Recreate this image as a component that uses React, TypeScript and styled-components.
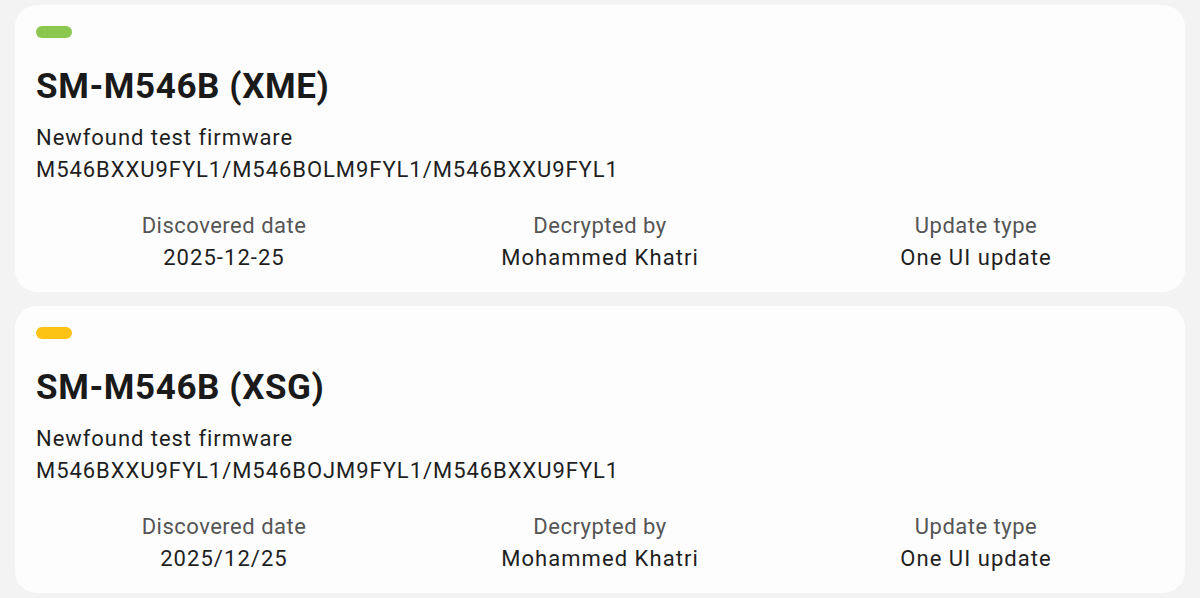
import React from "react";
import styled, { createGlobalStyle } from "styled-components";

const GlobalStyle = createGlobalStyle`
  html, body {
    margin: 0;
    padding: 0;
    background: #f3f3f3;
  }
  body {
    font-family: Roboto, "Noto Sans", "Liberation Sans", sans-serif;
    -webkit-font-smoothing: antialiased;
  }
`;

const Page = styled.div`
  display: flex;
  flex-direction: column;
  gap: 14px;
  padding: 5px 15px 6px 15px;
  width: 1200px;
  box-sizing: border-box;
`;

const Card = styled.section`
  background: #fdfdfd;
  border-radius: 22px;
  padding: 21px 21px 18px 21px;
  display: flex;
  flex-direction: column;
`;

const Pill = styled.div<{ $color: string }>`
  width: 36px;
  height: 12px;
  border-radius: 6px;
  background: ${(p) => p.$color};
`;

const Title = styled.h2`
  margin: 27px 0 0 0;
  font-size: 35px;
  line-height: 44px;
  font-weight: 700;
  color: #1a1a1a;
  letter-spacing: 0.6px;
`;

const Desc = styled.div`
  margin-top: 13px;
  font-size: 22px;
  line-height: 32px;
  color: #1f1f1f;
  letter-spacing: 0.95px;
`;

const InfoRow = styled.div`
  margin-top: 24px;
  display: grid;
  grid-template-columns: repeat(3, 1fr);
`;

const InfoCell = styled.div`
  display: flex;
  flex-direction: column;
  align-items: center;
  text-align: center;
`;

const Label = styled.span`
  font-size: 22px;
  line-height: 32px;
  color: #555555;
  letter-spacing: 0.5px;
`;

const Value = styled.span`
  font-size: 22px;
  line-height: 32px;
  color: #1f1f1f;
  letter-spacing: 1.05px;
`;

type Item = {
  color: string;
  title: string;
  firmware: string;
  date: string;
  by: string;
  type: string;
};

const items: Item[] = [
  {
    color: "#8bc750",
    title: "SM-M546B (XME)",
    firmware: "M546BXXU9FYL1/M546BOLM9FYL1/M546BXXU9FYL1",
    date: "2025-12-25",
    by: "Mohammed Khatri",
    type: "One UI update",
  },
  {
    color: "#fcc314",
    title: "SM-M546B (XSG)",
    firmware: "M546BXXU9FYL1/M546BOJM9FYL1/M546BXXU9FYL1",
    date: "2025/12/25",
    by: "Mohammed Khatri",
    type: "One UI update",
  },
];

export default function App() {
  return (
    <>
      <GlobalStyle />
      <Page>
        {items.map((it) => (
          <Card key={it.title}>
            <Pill $color={it.color} />
            <Title>{it.title}</Title>
            <Desc>
              Newfound test firmware
              <br />
              {it.firmware}
            </Desc>
            <InfoRow>
              <InfoCell>
                <Label>Discovered date</Label>
                <Value>{it.date}</Value>
              </InfoCell>
              <InfoCell>
                <Label>Decrypted by</Label>
                <Value>{it.by}</Value>
              </InfoCell>
              <InfoCell>
                <Label>Update type</Label>
                <Value>{it.type}</Value>
              </InfoCell>
            </InfoRow>
          </Card>
        ))}
      </Page>
    </>
  );
}
